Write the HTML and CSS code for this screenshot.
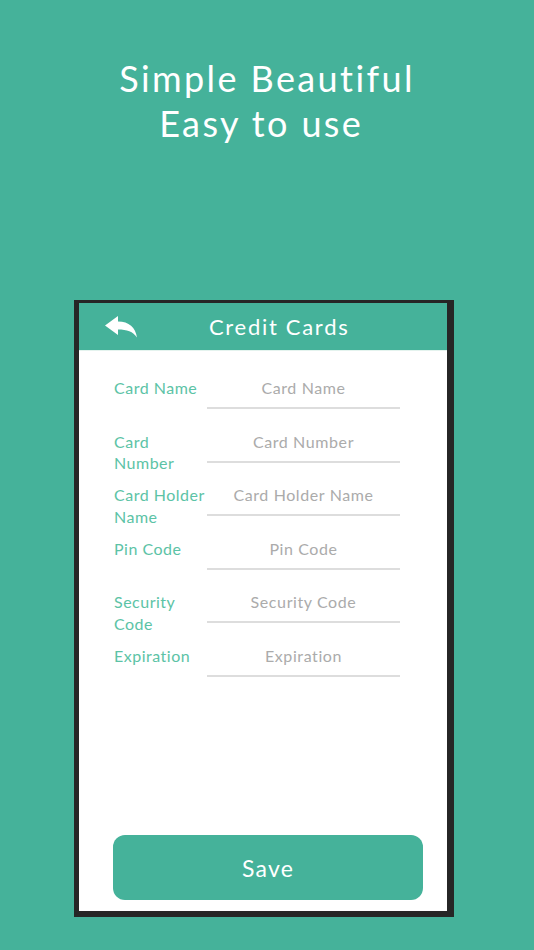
FILE: index.html
```html
<!DOCTYPE html>
<html lang="en">
<head>
    <meta charset="UTF-8">
    <meta name="viewport" content="width=device-width, initial-scale=1.0">
    <title>Credit Cards</title>
    <link rel="stylesheet" href="styles.css">
</head>
<body>
    <header class="hero">
        <h1>Simple Beautiful<br>Easy to use&nbsp;</h1>
    </header>

    <div class="phone">
        <div class="screen">
            <div class="app-bar">
                <svg class="back" width="32" height="22" viewBox="0 0 32 22" xmlns="http://www.w3.org/2000/svg">
                    <path d="M0 9.5L13 0V5.5C24 5.5 30.5 11.5 32 21.5C28 15.5 22 13.5 13 13.5V19Z" fill="#fff"/>
                </svg>
                <span class="app-title">Credit Cards</span>
            </div>

            <form class="card-form">
                <div class="row">
                    <label for="cardName">Card Name</label>
                    <input id="cardName" type="text" placeholder="Card Name">
                </div>
                <div class="row">
                    <label for="cardNumber">Card Number</label>
                    <input id="cardNumber" type="text" placeholder="Card Number">
                </div>
                <div class="row">
                    <label for="holder">Card Holder Name</label>
                    <input id="holder" type="text" placeholder="Card Holder Name">
                </div>
                <div class="row">
                    <label for="pin">Pin Code</label>
                    <input id="pin" type="text" placeholder="Pin Code">
                </div>
                <div class="row">
                    <label for="security">Security Code</label>
                    <input id="security" type="text" placeholder="Security Code">
                </div>
                <div class="row">
                    <label for="expiration">Expiration</label>
                    <input id="expiration" type="text" placeholder="Expiration">
                </div>
            </form>

            <button class="save-btn" type="button">Save</button>
        </div>
    </div>
</body>
</html>
```

FILE: styles.css
```css
:root {
    --teal: #45b29a;
    --teal-light: #5cc3a6;
    --frame: #262626;
}

body {
    font-family: 'Lato', 'Open Sans', sans-serif;
    margin: 0;
    padding: 0;
    background: var(--teal);
    color: #fff;
}

.hero {
    padding-top: 56px;
    height: 300px;
    box-sizing: border-box;
}

.hero h1 {
    margin: 0;
    text-align: center;
    font-size: 36px;
    font-weight: 400;
    line-height: 45px;
    letter-spacing: 2.4px;
}

.phone {
    margin-left: 74px;
    width: 380px;
    height: 617px;
    box-sizing: border-box;
    border-style: solid;
    border-color: var(--frame);
    border-width: 3px 7px 6px 5px;
}

.screen {
    height: 100%;
    background: #fff;
    display: flex;
    flex-direction: column;
}

.app-bar {
    height: 47px;
    background: var(--teal);
    display: flex;
    align-items: center;
    padding-left: 26px;
    border-bottom: 1px solid #e4f3ee;
}

.back {
    margin-top: 1px;
}

.app-title {
    margin-left: 72px;
    font-size: 22px;
    letter-spacing: 1.7px;
    color: #fff;
}

.card-form {
    padding: 25px 0 0 35px;
}

.row {
    display: flex;
    height: 53.6px;
}

.row label {
    width: 93px;
    font-size: 16px;
    line-height: 21.5px;
    letter-spacing: 0.5px;
    color: var(--teal-light);
    padding-top: 1px;
}

.row input {
    width: 193px;
    height: 33px;
    box-sizing: border-box;
    border: none;
    border-bottom: 2px solid #dddddd;
    padding: 0 0 8px;
    font-family: inherit;
    font-size: 16px;
    letter-spacing: 0.6px;
    text-align: center;
    outline: none;
    background: transparent;
}

.row input::placeholder {
    color: #ababab;
}

.save-btn {
    margin: auto 24px 11px 34px;
    height: 65px;
    border: none;
    border-radius: 12px;
    background: var(--teal);
    color: #fff;
    font-family: inherit;
    font-size: 23px;
    letter-spacing: 1.2px;
}
```
